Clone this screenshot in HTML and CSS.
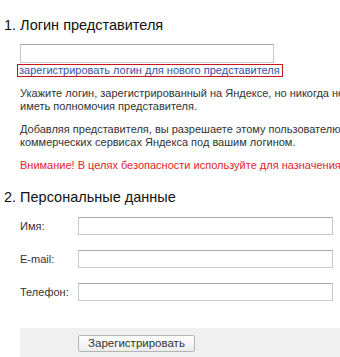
FILE: index.html
```
<!doctype html>
<html lang="ru">
<head>
  <meta charset="utf-8">
  <title>Регистрация представителя</title>
  <link rel="stylesheet" href="styles.css">
</head>
<body>
	<div class="page">
		<h1 class="section-title">1. Логин представителя</h1>
		<div class="section">
			<input type="text" class="login-input">
			<a href="#" class="hint">зарегистрировать логин для нового представителя</a>
			<p class="note">Укажите логин, зарегистрированный на Яндексе, но никогда не<br>иметь полномочия представителя.</p>
			<p class="note">Добавляя представителя, вы разрешаете этому пользователю<br>коммерческих сервисах Яндекса под вашим логином.</p>
			<p class="note warn">Внимание! В целях безопасности используйте для назначения</p>
		</div>

		<h1 class="section-title second">2. Персональные данные</h1>
		<div class="section">
			<div class="row"><label>Имя:</label><input type="text" class="field"></div>
			<div class="row"><label>E-mail:</label><input type="text" class="field"></div>
			<div class="row"><label>Телефон:</label><input type="text" class="field"></div>
		</div>

		<div class="actions">
			<button class="submit">Зарегистрировать</button>
		</div>
	</div>
</body>
</html>
```
FILE: styles.css
```
html,body{
	margin:0; padding:0;
	background:#fff;
	font-family:"Liberation Sans",Arial,sans-serif;
	overflow:hidden;
}
.page{ padding-left:4px; width:400px; }

.section-title{
	font-size:14.5px;
	line-height:20px;
	font-weight:normal;
	color:#111;
	margin:15px 0 9px 0;
}
.section-title.second{ margin:15px 0 10px 0; }

.section{ padding-left:16px; }

.login-input{
	display:block;
	box-sizing:border-box;
	width:254px; height:19px;
	margin:0;
	border:1px solid #c8c8c8;
	border-top-color:#a8a8a8;
}
.hint{
	display:block;
	width:max-content;
	margin:1px 0 0 -3px;
	padding:0 2px 0 1px;
	line-height:11px;
	font-size:11px;
	color:#3b4fa8;
	text-decoration:none;
	border:1px solid #c8161d;
}

.note{
	margin:10px 0 0 0;
	font-size:11px;
	line-height:13px;
	color:#333;
	white-space:nowrap;
}
.note.warn{ color:#e0262b; }

.row{ display:flex; align-items:center; height:18px; margin-bottom:15px; }
.row label{ width:58px; font-size:11px; color:#333; }
.field{
	box-sizing:border-box;
	width:255px; height:18px;
	margin:0;
	border:1px solid #c8c8c8;
	border-top-color:#a8a8a8;
}

.actions{
	margin:27px 0 0 16px;
	padding:5px 0 10px 58px;
	background:#f0f0f0;
}
button{ cursor:pointer; }
.submit{
	box-sizing:border-box;
	width:117px; height:17px;
	padding:0;
	font-family:"Liberation Sans",Arial,sans-serif;
	font-size:11.5px;
	color:#333;
	background:linear-gradient(#fff,#ececec);
	border:1px solid #b5b5b5;
	border-radius:2px;
}
```
